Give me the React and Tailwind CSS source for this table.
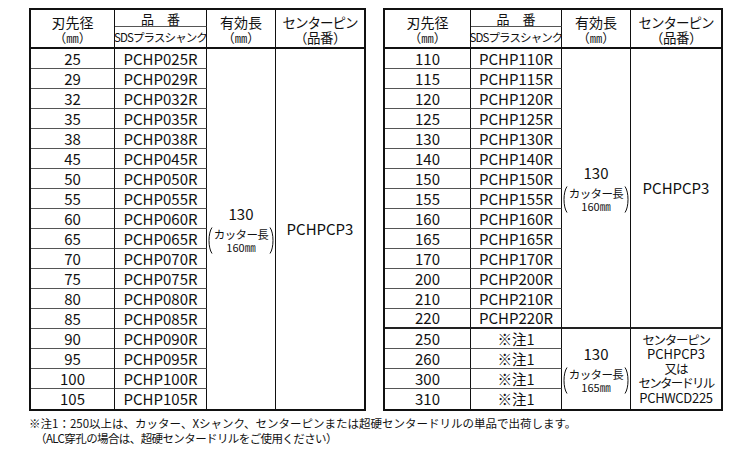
import React from 'react';

const leftRows = [
  ['25', 'PCHP025R'], ['29', 'PCHP029R'], ['32', 'PCHP032R'], ['35', 'PCHP035R'],
  ['38', 'PCHP038R'], ['45', 'PCHP045R'], ['50', 'PCHP050R'], ['55', 'PCHP055R'],
  ['60', 'PCHP060R'], ['65', 'PCHP065R'], ['70', 'PCHP070R'], ['75', 'PCHP075R'],
  ['80', 'PCHP080R'], ['85', 'PCHP085R'], ['90', 'PCHP090R'], ['95', 'PCHP095R'],
  ['100', 'PCHP100R'], ['105', 'PCHP105R'],
];

const rightRows = [
  ['110', 'PCHP110R'], ['115', 'PCHP115R'], ['120', 'PCHP120R'], ['125', 'PCHP125R'],
  ['130', 'PCHP130R'], ['140', 'PCHP140R'], ['150', 'PCHP150R'], ['155', 'PCHP155R'],
  ['160', 'PCHP160R'], ['165', 'PCHP165R'], ['170', 'PCHP170R'], ['200', 'PCHP200R'],
  ['210', 'PCHP210R'], ['220', 'PCHP220R'],
  ['250', '※注1'], ['260', '※注1'], ['300', '※注1'], ['310', '※注1'],
];

function Paren({ right }) {
  return (
    <svg width="6" height="27" viewBox="0 0 6 27" className="shrink-0">
      <path
        d={right ? 'M1 0.5 C5 6 5 21 1 26.5' : 'M5 0.5 C1 6 1 21 5 26.5'}
        fill="none"
        stroke="currentColor"
        strokeWidth="1"
      />
    </svg>
  );
}

function Length({ cutter }) {
  return (
    <div className="flex flex-col items-center">
      <div className="text-[15px] leading-[18px]">130</div>
      <div className="flex items-center mt-[4px] gap-[1px]">
        <Paren />
        <div className="flex flex-col items-center">
          <span className="text-[11.5px] leading-[13px] tracking-[-0.6px] whitespace-nowrap">カッター長</span>
          <span className="text-[11px] leading-[12px] whitespace-nowrap">{cutter}㎜</span>
        </div>
        <Paren right />
      </div>
    </div>
  );
}

function Header() {
  return (
    <>
      <div className="row-span-2 border-r border-b-2 border-[#111] flex flex-col items-center justify-center pt-[1px]">
        <span className="text-[14px] leading-[16px]">刃先径</span>
        <span className="text-[12.5px] leading-[15px]">（㎜）</span>
      </div>
      <div className="border-r border-r-[#111] border-b border-b-[#555] flex items-center justify-center">
        <span className="text-[13px] leading-[15px]">品　番</span>
      </div>
      <div className="row-span-2 border-r border-b-2 border-[#111] flex flex-col items-center justify-center pt-[1px]">
        <span className="text-[14px] leading-[16px]">有効長</span>
        <span className="text-[12.5px] leading-[15px]">（㎜）</span>
      </div>
      <div className="row-span-2 border-b-2 border-[#111] flex flex-col items-center justify-center pt-[1px]">
        <span className="text-[13.5px] leading-[16px] tracking-[-1px] whitespace-nowrap">センターピン</span>
        <span className="text-[13.5px] leading-[15px] tracking-[-0.5px]">（品番）</span>
      </div>
      <div className="border-r border-b-2 border-[#111] flex items-center justify-center">
        <span className="text-[11.5px] leading-[15px] tracking-[-0.9px] whitespace-nowrap">SDSプラスシャンク</span>
      </div>
    </>
  );
}

function BodyCell({ children, last, thick }) {
  let cls = 'flex items-center justify-center text-[15px] leading-[20px] border-r border-r-[#111] border-[#555]';
  if (thick) cls += ' border-b-2 border-b-[#222]';
  else if (!last) cls += ' border-b';
  return <div className={cls}>{children}</div>;
}

function LeftTable() {
  return (
    <div className="border-2 border-[#111] grid grid-cols-[84px_92px_69px_88px] grid-rows-[17px_22px_repeat(18,20px)]">
      <Header />
      {leftRows.map((r, i) => (
        <React.Fragment key={r[0]}>
          <BodyCell last={i === leftRows.length - 1}>{r[0]}</BodyCell>
          <BodyCell last={i === leftRows.length - 1}>{r[1]}</BodyCell>
          {i === 0 && (
            <>
              <div className="row-span-18 border-r border-[#111] flex items-center justify-center">
                <Length cutter="160" />
              </div>
              <div className="row-span-18 flex items-center justify-center text-[15px] leading-[20px]">
                PCHPCP3
              </div>
            </>
          )}
        </React.Fragment>
      ))}
    </div>
  );
}

function RightTable() {
  return (
    <div className="border-2 border-[#111] grid grid-cols-[86px_91px_69px_90px] grid-rows-[17px_22px_repeat(18,20px)]">
      <Header />
      {rightRows.map((r, i) => (
        <React.Fragment key={r[0]}>
          <BodyCell thick={i === 13} last={i === rightRows.length - 1}>{r[0]}</BodyCell>
          <BodyCell thick={i === 13} last={i === rightRows.length - 1}>
            {i > 13 ? <span className="text-[14.5px]">{r[1]}</span> : r[1]}
          </BodyCell>
          {i === 0 && (
            <>
              <div className="row-span-14 border-r border-[#111] border-b-2 border-b-[#222] flex items-center justify-center">
                <Length cutter="160" />
              </div>
              <div className="row-span-14 border-b-2 border-b-[#222] flex items-center justify-center text-[15px] leading-[20px]">
                PCHPCP3
              </div>
            </>
          )}
          {i === 14 && (
            <>
              <div className="row-span-4 border-r border-[#111] flex items-center justify-center">
                <Length cutter="165" />
              </div>
              <div className="row-span-4 flex flex-col items-center justify-center text-[12.5px] leading-[14.5px] whitespace-nowrap">
                <span className="tracking-[-1.3px]">センターピン</span>
                <span className="text-[13px]">PCHPCP3</span>
                <span className="tracking-[-1px]">又は</span>
                <span className="tracking-[-1.8px]">センタードリル</span>
                <span className="text-[13px] tracking-[-0.3px]">PCHWCD225</span>
              </div>
            </>
          )}
        </React.Fragment>
      ))}
    </div>
  );
}

export default function App() {
  return (
    <div className="w-[750px] h-[450px] overflow-hidden bg-white text-[#111] pt-[8px] pl-[29px] font-['Noto_Sans_CJK_JP','Noto_Sans_CJK_SC',sans-serif]">
      <div className="flex gap-[17px]">
        <LeftTable />
        <RightTable />
      </div>
      <div className="mt-[5px] text-[11.5px] leading-[15px] whitespace-nowrap">
        <div>※注1：250以上は、カッター、Xシャンク、センターピンまたは超硬センタードリルの単品で出荷します。</div>
        <div className="pl-[6px] tracking-[-0.6px]">（ALC穿孔の場合は、超硬センタードリルをご使用ください）</div>
      </div>
    </div>
  );
}
